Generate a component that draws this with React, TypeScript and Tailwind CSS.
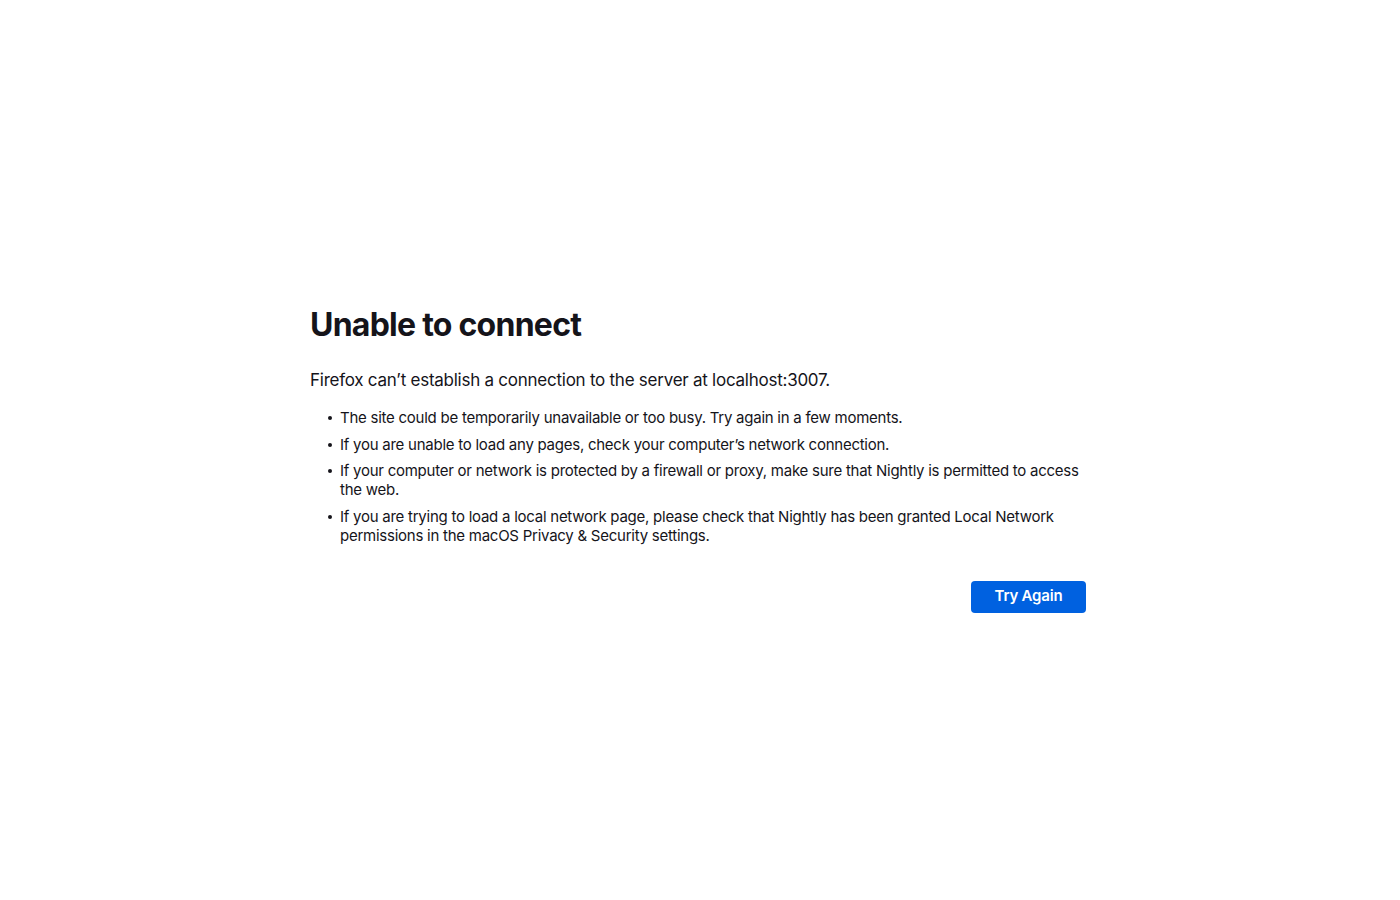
const items = [
  "The site could be temporarily unavailable or too busy. Try again in a few moments.",
  "If you are unable to load any pages, check your computer\u2019s network connection.",
  "If your computer or network is protected by a firewall or proxy, make sure that Nightly is permitted to access the web.",
  "If you are trying to load a local network page, please check that Nightly has been granted Local Network permissions in the macOS Privacy & Security settings.",
];

export default function App() {
  return (
    <div className="min-h-screen bg-white flex flex-col items-center pt-[305px] text-[#15141a] font-['Inter','Liberation_Sans',sans-serif]">
      <div className="w-[780px] pr-1">
        <h1 className="text-[32px] leading-[40px] font-bold tracking-[-0.75px]">Unable to connect</h1>
        <p className="mt-[23px] text-[17px] leading-[24px] tracking-[-0.25px]">
          Firefox can{"\u2019"}t establish a connection to the server at localhost:3007.
        </p>
        <ul className="mt-[16px] flex flex-col gap-[7.5px] text-[15px] leading-[19px] tracking-[-0.25px]">
          {items.map((t, i) => (
            <li key={i} className="flex">
              <span className="w-[30px] h-[19px] shrink-0 flex items-center pl-[17.5px] pt-[1px]">
                <span className="block w-[4px] h-[4px] rounded-full bg-[#15141a]" />
              </span>
              <span>{t}</span>
            </li>
          ))}
        </ul>
        <div className="mt-[36px] flex justify-end">
          <button className="h-8 w-[115px] rounded bg-[#0061e0] text-white text-[15px] font-semibold tracking-[-0.2px]">
            Try Again
          </button>
        </div>
      </div>
    </div>
  );
}
